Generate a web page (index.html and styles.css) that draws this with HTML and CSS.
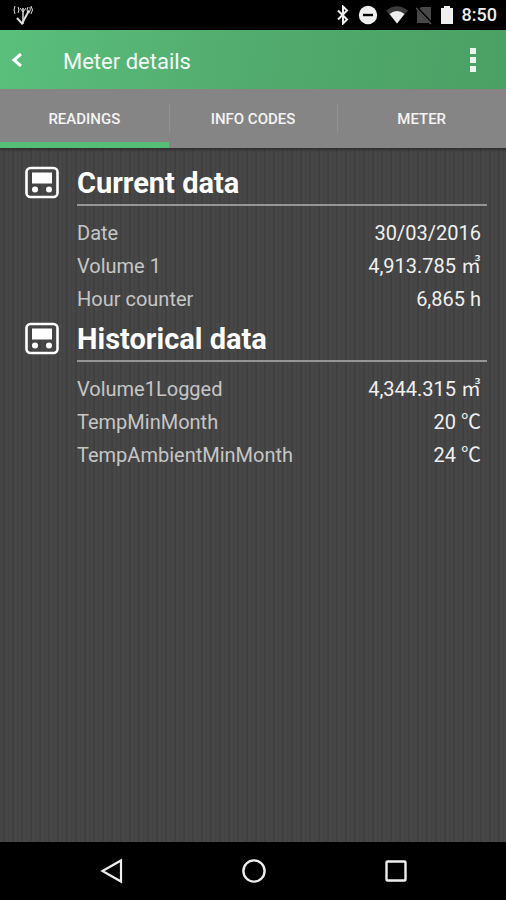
FILE: index.html
```html
<!DOCTYPE html>
<html lang="en">
<head>
<meta charset="utf-8">
<meta name="viewport" content="width=device-width, initial-scale=1">
<title>Meter details</title>
<link rel="stylesheet" href="styles.css">
</head>
<body>
<div class="status">
  <svg class="notice" width="22" height="22" viewBox="0 0 22 22" fill="none" stroke="#ddd">
    <path d="M11 4v16" stroke-width="1.5"/>
    <path d="M5 14l5 5.500 7-13" stroke-width="2"/>
    <path d="M8 4l3 4 3-4M3 2q-2 4 0 8M6 3q2 3 0 6M16 3q-2 3 0 6M19 2q3 4 0 8M18 3q1 3-1 6" stroke-width="1"/>
  </svg>
  <div class="system">
    <svg width="14" height="20" viewBox="0 0 14 20" fill="none" stroke="#eee" stroke-width="2"><path d="M2 5.500l9 9-4 4V1.500l4 4-9 9"/></svg>
    <svg width="20" height="20" viewBox="0 0 20 20"><circle cx="10" cy="10" r="9.200" fill="#eee"/><path d="M5 10h10" stroke="#000" stroke-width="2.400"/></svg>
    <svg width="22" height="20" viewBox="0 0 22 20"><path d="M0 5.500Q11-3 22 5.500L11 18.500z" fill="#3b3b3b"/><path d="M3.500 9Q11 3 18.500 9L11 18.500z" fill="#eee"/></svg>
    <svg width="16" height="20" viewBox="0 0 16 20"><path d="M5 2h10v16H1V6z" fill="#484848"/><path d="M0 2l16 17" stroke="#000" stroke-width="3"/><path d="M0 3l15 16" stroke="#555" stroke-width="1.500"/></svg>
    <svg width="14" height="20" viewBox="0 0 14 20"><path d="M4 1h6v2h3v16H1V3h3z" fill="#eee"/></svg>
    <span class="time">8:50</span>
  </div>
</div>
<header class="appbar">
  <button class="back" aria-label="Back"><svg width="14" height="16" viewBox="0 0 14 16" fill="none" stroke="#fff" stroke-width="3"><path d="M11 2L4 8l7 6"/></svg></button>
  <h1>Meter details</h1>
  <button class="more" aria-label="More options"><svg width="8" height="26" viewBox="0 0 8 26" fill="#e9f6ed"><path d="M1 1h6v6H1zM1 10h6v6H1zM1 19h6v6H1z"/></svg></button>
</header>
<nav class="tabs">
  <button class="tab active">READINGS</button>
  <button class="tab">INFO CODES</button>
  <button class="tab">METER</button>
</nav>
<main>
  <section>
    <svg class="meter" width="34" height="34" viewBox="0 0 34 34"><rect x="1.500" y="2" width="31" height="29" rx="4" fill="none" stroke="#fff" stroke-width="2.600"/><path d="M7 6.500h20v11H7z" fill="#fff"/><circle cx="10" cy="23.500" r="3" fill="#fff"/><circle cx="24" cy="23.500" r="3" fill="#fff"/></svg>
    <div class="data">
      <h2>Current data</h2>
      <dl>
        <div><dt>Date</dt><dd>30/03/2016</dd></div>
        <div><dt>Volume 1</dt><dd>4,913.785 ㎥</dd></div>
        <div><dt>Hour counter</dt><dd>6,865 h</dd></div>
      </dl>
    </div>
  </section>
  <section>
    <svg class="meter" width="34" height="34" viewBox="0 0 34 34"><rect x="1.500" y="2" width="31" height="29" rx="4" fill="none" stroke="#fff" stroke-width="2.600"/><path d="M7 6.500h20v11H7z" fill="#fff"/><circle cx="10" cy="23.500" r="3" fill="#fff"/><circle cx="24" cy="23.500" r="3" fill="#fff"/></svg>
    <div class="data">
      <h2>Historical data</h2>
      <dl>
        <div><dt>Volume1Logged</dt><dd>4,344.315 ㎥</dd></div>
        <div><dt>TempMinMonth</dt><dd>20 ℃</dd></div>
        <div><dt>TempAmbientMinMonth</dt><dd>24 ℃</dd></div>
      </dl>
    </div>
  </section>
</main>
<footer class="keys">
  <button aria-label="Back"><svg width="24" height="26" viewBox="0 0 24 26" fill="none" stroke="#eee" stroke-width="2.200"><path d="M21 2.500v21L2.500 13z"/></svg></button>
  <button aria-label="Home"><svg width="26" height="26" viewBox="0 0 26 26" fill="none" stroke="#eee" stroke-width="2.400"><circle cx="13" cy="13" r="10.600"/></svg></button>
  <button aria-label="Recent apps"><svg width="24" height="26" viewBox="0 0 24 26" fill="none" stroke="#eee" stroke-width="2.400"><rect x="2.500" y="3.500" width="19" height="19" rx="1"/></svg></button>
</footer>
</body>
</html>
```
FILE: styles.css
```css
* { box-sizing: border-box; }
body {
  margin: 0;
  min-height: 100vh;
  display: flex;
  flex-direction: column;
  background: #000;
  color: #fff;
  font-family: Roboto, "Noto Sans CJK JP", sans-serif;
}
h1, h2, dl, dd { margin: 0; }
button {
  border: 0;
  padding: 0;
  background: none;
  color: inherit;
  font: inherit;
}
svg { display: block; }
.status {
  display: flex;
  align-items: center;
  justify-content: space-between;
  height: 30px;
  padding: 0 9px 0 12px;
}
.system {
  display: flex;
  align-items: center;
  gap: 8px;
}
.time {
  color: #eee;
  font-size: 18px;
  font-weight: 500;
  line-height: 32px;
}
.appbar {
  display: flex;
  align-items: center;
  height: 59px;
  padding: 0 29px 0 10px;
  background: linear-gradient(100deg, #5abf7c, #52ab6e 50%, #4ba064);
}
.back { width: 53px; }
.appbar h1 {
  flex: 1;
  padding-top: 3px;
  color: #f4fbf6;
  font-size: 22px;
  font-weight: 400;
}
.tabs {
  display: grid;
  grid-template-columns: repeat(3, 1fr);
  background: #858585;
}
.tab {
  position: relative;
  height: 59px;
  border-bottom: 6px solid transparent;
  padding-top: 6px;
  color: #f4f4f4;
  font-size: 15px;
  font-weight: 500;
}
.tab.active { border-color: #55bd78; }
.tab + .tab::before {
  content: "";
  position: absolute;
  left: 0;
  top: 15px;
  width: 1px;
  height: 29px;
  background: #929292;
}
main {
  flex: 1;
  padding: 11px 19px 16px 25px;
  background:
    linear-gradient(#2c2c2c, transparent 4px),
    repeating-linear-gradient(90deg, #464646 0 3px, #404040 3px 5px, #474747 5px 8px, #424242 8px 9px);
}
section {
  display: flex;
  gap: 18px;
}
.meter { margin-top: 7px; }
.data { flex: 1; }
h2 {
  padding-top: 4px;
  border-bottom: 2px solid #969696;
  font-size: 29px;
  font-weight: 700;
  line-height: 41px;
}
dl { padding: 11px 6px 0 0; }
dl div {
  display: flex;
  justify-content: space-between;
  font-size: 20px;
  line-height: 33px;
}
dl div:last-child { height: 32px; }
dt { color: #c6c6c6; }
dd { color: #f0f0f0; }
.keys {
  display: flex;
  justify-content: space-between;
  align-items: center;
  height: 58px;
  padding: 0 98px 0 100px;
}
```
